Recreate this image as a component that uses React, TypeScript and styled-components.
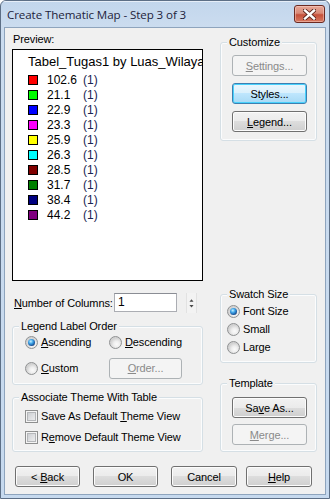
import styled, { createGlobalStyle } from "styled-components";

const GlobalStyle = createGlobalStyle`
  html, body {
    margin: 0;
    padding: 0;
    background: #ffffff;
  }
  body {
    font-family: "Liberation Sans", Arial, sans-serif;
    font-size: 11px;
    letter-spacing: -0.12px;
    color: #000;
  }
  u {
    text-underline-offset: 1px;
  }
`;

type LegendItem = { color: string; value: string; count: number };

const legendItems: LegendItem[] = [
  { color: "#ff0000", value: "102.6", count: 1 },
  { color: "#00ff00", value: "21.1", count: 1 },
  { color: "#0000ff", value: "22.9", count: 1 },
  { color: "#ff00ff", value: "23.3", count: 1 },
  { color: "#ffff00", value: "25.9", count: 1 },
  { color: "#00ffff", value: "26.3", count: 1 },
  { color: "#800000", value: "28.5", count: 1 },
  { color: "#008000", value: "31.7", count: 1 },
  { color: "#000080", value: "38.4", count: 1 },
  { color: "#800080", value: "44.2", count: 1 },
];

function CloseGlyph() {
  return (
    <svg width="13" height="11" viewBox="0 0 13 11">
      <path d="M2 1.5 L11 9.5 M11 1.5 L2 9.5" stroke="#5a241c" strokeWidth="4.2" strokeLinecap="square" />
      <path d="M2 1.5 L11 9.5 M11 1.5 L2 9.5" stroke="#ffffff" strokeWidth="2.4" strokeLinecap="square" />
    </svg>
  );
}

function SpinArrows() {
  return (
    <svg width="11" height="19" viewBox="0 0 11 19">
      <path d="M3 8.5 L8 8.5 L5.5 5.5 Z" fill="#4a4a4a" />
      <path d="M3 12.5 L8 12.5 L5.5 15.5 Z" fill="#4a4a4a" />
    </svg>
  );
}

export default function App() {
  return (
    <>
      <GlobalStyle />
      <Window>
        <TitleBar>
          <Title>Create Thematic Map - Step 3 of 3</Title>
          <CloseBox>
            <CloseGlyph />
          </CloseBox>
        </TitleBar>

        <Client>
          <Body>
            <LeftColumn>
              <Caption>Preview:</Caption>
              <PreviewBox>
                <LegendTitle>Tabel_Tugas1 by Luas_Wilayah</LegendTitle>
                {legendItems.map((item) => (
                  <LegendRow key={item.value}>
                    <Swatch $color={item.color} />
                    <Value>{item.value}</Value>
                    <Count>({item.count})</Count>
                  </LegendRow>
                ))}
              </PreviewBox>

              <FieldRow>
                <FieldLabel>
                  <u>N</u>umber of Columns:
                </FieldLabel>
                <NumberInput>1</NumberInput>
                <Spinner>
                  <SpinArrows />
                </Spinner>
              </FieldRow>

              <Group $top={14}>
                <GroupLabel>Legend Label Order</GroupLabel>
                <OptionGrid>
                  <Option>
                    <Radio $checked />
                    <span>
                      <u>A</u>scending
                    </span>
                  </Option>
                  <Option>
                    <Radio />
                    <span>
                      <u>D</u>escending
                    </span>
                  </Option>
                  <Option>
                    <Radio />
                    <span>
                      <u>C</u>ustom
                    </span>
                  </Option>
                  <Button $variant="disabled" $width={73}>
                    <u>O</u>rder...
                  </Button>
                </OptionGrid>
              </Group>

              <Group $top={12}>
                <GroupLabel>Associate Theme With Table</GroupLabel>
                <CheckList>
                  <Option>
                    <CheckBox />
                    <span>
                      Save As Default <u>T</u>heme View
                    </span>
                  </Option>
                  <Option>
                    <CheckBox />
                    <span>
                      R<u>e</u>move Default Theme View
                    </span>
                  </Option>
                </CheckList>
              </Group>
            </LeftColumn>

            <RightColumn>
              <Group $top={9}>
                <GroupLabel>Customize</GroupLabel>
                <ButtonStack $gap={7} $pad="6px 9px 8px 11px">
                  <Button $variant="disabled">
                    <u>S</u>ettings...
                  </Button>
                  <Button $variant="focused">Styles...</Button>
                  <Button>
                    <u>L</u>egend...
                  </Button>
                </ButtonStack>
              </Group>

              <Group $top={153}>
                <GroupLabel>Swatch Size</GroupLabel>
                <RadioList>
                  <Option>
                    <Radio $checked />
                    <span>Font Size</span>
                  </Option>
                  <Option>
                    <Radio />
                    <span>Small</span>
                  </Option>
                  <Option>
                    <Radio />
                    <span>Large</span>
                  </Option>
                </RadioList>
              </Group>

              <Group $top={20}>
                <GroupLabel>Template</GroupLabel>
                <ButtonStack $gap={6} $pad="7px 9px 6px 11px">
                  <Button>
                    Sa<u>v</u>e As...
                  </Button>
                  <Button $variant="disabled">
                    <u>M</u>erge...
                  </Button>
                </ButtonStack>
              </Group>
            </RightColumn>
          </Body>

          <Footer>
            <Button $width={65}>
              &lt;{" "}<u>B</u>ack
            </Button>
            <Button $width={65}>OK</Button>
            <Button $width={66}>Cancel</Button>
            <Button $width={66} $pullLeft={4}>
              <u>H</u>elp
            </Button>
          </Footer>
        </Client>
      </Window>
    </>
  );
}

/* ============ styled-components ============ */

const Window = styled.div`
  width: 330px;
  height: 499px;
  box-sizing: border-box;
  display: flex;
  flex-direction: column;
  border: 1px solid #5d6f86;
  border-radius: 6px 6px 0 0;
  background: linear-gradient(to bottom, #c2d6ec 0px, #cbdcef 26px, #c6d9ee 100%);
  overflow: hidden;
`;

const TitleBar = styled.div`
  height: 26px;
  display: flex;
  align-items: center;
  padding: 0 4px 0 6px;
  box-shadow: inset 0 1px 0 #e6eef8;
`;

const Title = styled.div`
  flex: 1;
  font-family: "Open Sans", "Noto Sans", sans-serif;
  font-size: 11.6px;
  color: #1e1e3c;
  letter-spacing: -0.1px;
  white-space: nowrap;
`;

const CloseBox = styled.div`
  width: 31px;
  height: 18px;
  box-sizing: border-box;
  display: flex;
  align-items: center;
  justify-content: center;
  border: 1px solid #6b2a22;
  border-radius: 3px;
  background: linear-gradient(to bottom, #e6a797 0%, #d98a78 45%, #c5503a 55%, #d77a62 100%);
  box-shadow: inset 0 0 0 1px rgba(255, 220, 210, 0.45);
`;

const Client = styled.div`
  flex: 1;
  margin: 0 3px 3px 3px;
  border: 1px solid #8ea4bd;
  background: #f0f0f0;
  display: flex;
  flex-direction: column;
  padding: 5px 7px 7px 7px;
`;

const Body = styled.div`
  display: flex;
  align-items: flex-start;
`;

const LeftColumn = styled.div`
  width: 191px;
  display: flex;
  flex-direction: column;
`;

const RightColumn = styled.div`
  width: 97px;
  margin-left: 17px;
  display: flex;
  flex-direction: column;
`;

const Caption = styled.div`
  height: 13px;
  line-height: 13px;
  padding-left: 1px;
`;

const PreviewBox = styled.div`
  margin-top: 3px;
  height: 232px;
  box-sizing: border-box;
  border: 1px solid #000;
  background: #fff;
  padding: 4px 0 0 15px;
  overflow: hidden;
  letter-spacing: 0;
  font-family: "Liberation Sans", Arial, sans-serif;
`;

const LegendTitle = styled.div`
  font-size: 13px;
  line-height: 16px;
  white-space: nowrap;
  margin-bottom: 2px;
`;

const LegendRow = styled.div`
  height: 15px;
  display: flex;
  align-items: center;
  font-size: 12px;
`;

const Swatch = styled.span<{ $color: string }>`
  width: 10px;
  height: 10px;
  box-sizing: border-box;
  border: 1px solid #000;
  background: ${({ $color }) => $color};
  flex-shrink: 0;
`;

const Value = styled.span`
  width: 36px;
  margin-left: 9px;
  color: #000;
`;

const Count = styled.span`
  color: #1a2350;
`;

const FieldRow = styled.div`
  margin-top: 12px;
  height: 19px;
  display: flex;
  align-items: center;
`;

const FieldLabel = styled.div`
  width: 102px;
  padding-left: 2px;
  box-sizing: border-box;
  white-space: nowrap;
`;

const NumberInput = styled.div`
  width: 63px;
  height: 19px;
  box-sizing: border-box;
  border: 1px solid #abadb3;
  border-top-color: #8a8d94;
  background: #fff;
  font-size: 12px;
  line-height: 17px;
  padding-left: 3px;
`;

const Spinner = styled.div`
  width: 11px;
  height: 20px;
  margin-left: 9px;
  box-sizing: border-box;
  border-left: 1px solid #e2e2e2;
  border-right: 1px solid #e2e2e2;
  background: #f3f3f3;
  display: flex;
  align-items: center;
  justify-content: center;
`;

const Group = styled.div<{ $top: number }>`
  margin-top: ${({ $top }) => $top}px;
  display: flex;
  flex-direction: column;
  border: 1px solid #d5dfe5;
  border-radius: 3px;
  box-shadow: inset 0 0 0 1px #fbfcfd;
`;

const GroupLabel = styled.div`
  align-self: flex-start;
  margin: -7px 0 0 6px;
  padding: 0 2px;
  height: 13px;
  line-height: 13px;
  background: #f0f0f0;
  white-space: nowrap;
`;

const OptionGrid = styled.div`
  display: grid;
  grid-template-columns: 84px 1fr;
  grid-template-rows: 13px 20px;
  row-gap: 9px;
  align-items: center;
  padding: 3px 6px 6px 12px;
`;

const CheckList = styled.div`
  display: flex;
  flex-direction: column;
  gap: 8px;
  padding: 6px 6px 7px 12px;
`;

const RadioList = styled.div`
  display: flex;
  flex-direction: column;
  gap: 5px;
  padding: 4px 6px 8px 6px;
`;

const ButtonStack = styled.div<{ $gap: number; $pad: string }>`
  display: flex;
  flex-direction: column;
  gap: ${({ $gap }) => $gap}px;
  padding: ${({ $pad }) => $pad};
`;

const Option = styled.label`
  height: 13px;
  display: flex;
  align-items: center;
  gap: 3px;
  white-space: nowrap;
  line-height: 13px;
`;

const Radio = styled.span<{ $checked?: boolean }>`
  position: relative;
  width: 13px;
  height: 13px;
  box-sizing: border-box;
  flex-shrink: 0;
  border-radius: 50%;
  border: 1px solid #8f9192;
  background: radial-gradient(circle at 60% 65%, #fbfbfb 0px, #eeeeee 3px, #d2d2d2 6px);

  &::after {
    content: "";
    display: ${({ $checked }) => ($checked ? "block" : "none")};
    position: absolute;
    left: 2px;
    top: 2px;
    width: 7px;
    height: 7px;
    border-radius: 50%;
    background: radial-gradient(circle at 40% 35%, #c8f1ff 0px, #45aaeb 2px, #1b5ea6 4px, #17386b 5px);
  }
`;

const CheckBox = styled.span`
  width: 13px;
  height: 13px;
  box-sizing: border-box;
  flex-shrink: 0;
  border: 1px solid #8e8f8f;
  background: linear-gradient(135deg, #c4c7cb 0%, #e2e3e5 60%, #f2f2f2 100%);
  box-shadow: inset 0 0 0 1px #f4f4f4, inset 0 0 0 2px #b4b6b9;
`;

const Button = styled.div<{
  $variant?: "normal" | "disabled" | "focused";
  $width?: number;
  $pullLeft?: number;
}>`
  width: ${({ $width }) => ($width ? `${$width}px` : "75px")};
  height: 21px;
  box-sizing: border-box;
  margin-left: ${({ $pullLeft }) => ($pullLeft ? `-${$pullLeft}px` : "0")};
  display: flex;
  align-items: center;
  justify-content: center;
  border-radius: 3px;
  white-space: pre;
  font-size: 11px;
  border: 1px solid
    ${({ $variant }) =>
      $variant === "disabled" ? "#adb2b5" : $variant === "focused" ? "#3c7fb1" : "#707070"};
  color: ${({ $variant }) => ($variant === "disabled" ? "#8a8a8a" : "#000")};
  background: ${({ $variant }) =>
    $variant === "disabled"
      ? "#f4f4f4"
      : $variant === "focused"
      ? "linear-gradient(to bottom, #eaf6fd 0%, #d9f0fc 50%, #bee6fd 50%, #a7d9f5 100%)"
      : "linear-gradient(to bottom, #f2f2f2 0%, #ebebeb 50%, #dddddd 50%, #cfcfcf 100%)"};
  box-shadow: ${({ $variant }) =>
    $variant === "disabled"
      ? "none"
      : $variant === "focused"
      ? "inset 0 0 0 1px #48d1fc"
      : "inset 0 0 0 1px #fcfcfc"};
`;

const Footer = styled.div`
  margin-top: auto;
  display: flex;
  gap: 13px;
  padding-left: 3px;
`;
